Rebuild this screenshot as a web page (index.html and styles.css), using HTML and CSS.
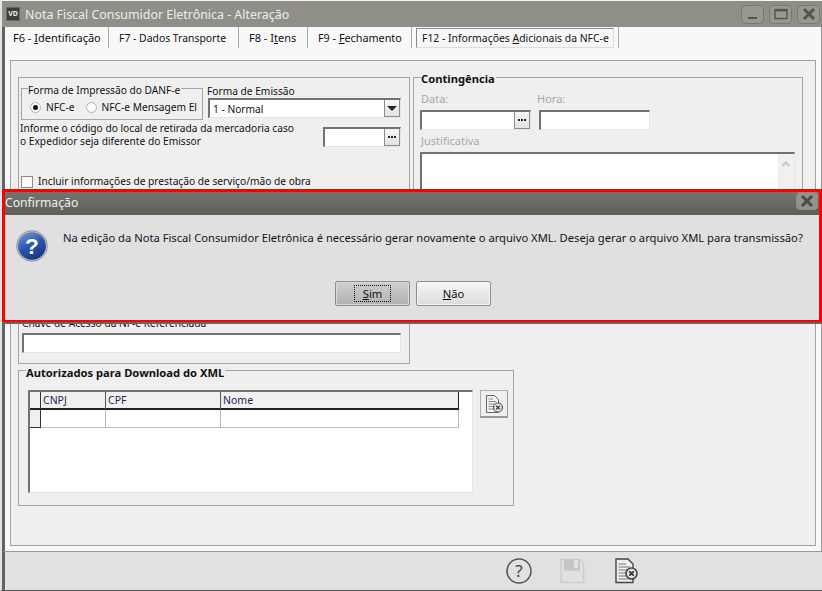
FILE: index.html
```html
<!DOCTYPE html>
<html lang="pt-BR">
<head>
  <meta charset="UTF-8" />
  <title>Nota Fiscal Consumidor Eletrônica - Alteração</title>
  <link rel="stylesheet" href="styles.css">
</head>
<body>
  <div class="window">

    <div class="titlebar">
      <span class="app-icon">VD</span>
      <span class="app-title">Nota Fiscal Consumidor Eletrônica - Alteração</span>
      <div class="win-buttons">
        <span class="win-btn">
          <svg width="12" height="12" viewBox="0 0 12 12"><rect x="1" y="9" width="9" height="2" fill="#55554f"/></svg>
        </span>
        <span class="win-btn">
          <svg width="14" height="12" viewBox="0 0 14 12"><rect x="1" y="1.5" width="12" height="9" fill="none" stroke="#55554f" stroke-width="1.4"/><rect x="1" y="1" width="12" height="2.4" fill="#55554f"/></svg>
        </span>
        <span class="win-btn">
          <svg width="14" height="12" viewBox="0 0 14 12"><path d="M2 1 L12 11 M12 1 L2 11" stroke="#55554f" stroke-width="3"/></svg>
        </span>
      </div>
    </div>

    <div class="content">
      <div class="tabs">
        <span class="tab tab-1"><span>F6 - <u>I</u>dentificação</span></span>
        <span class="tab tab-2"><span>F7 - Dados Transporte</span></span>
        <span class="tab tab-3"><span>F8 - I<u>t</u>ens</span></span>
        <span class="tab tab-4"><span>F9 - <u>F</u>echamento</span></span>
        <span class="tab-active"><span class="tab-active-in"><span>F12 - Informações <u>A</u>dicionais da NFC-e</span></span></span>
      </div>

      <div class="page">
        <div class="top-row">

          <!-- left panel -->
          <div class="panel-left">
            <div class="emit-row">
              <div class="group print-group">
                <div class="group-title">Forma de Impressão do DANF-e</div>
                <div class="radios">
                  <span class="radio radio-on"></span><span class="radio-label">NFC-e</span>
                  <span class="radio"></span><span class="radio-label">NFC-e Mensagem El</span>
                </div>
              </div>
              <div class="emit-col">
                <div class="emit-label">Forma de Emissão</div>
                <div class="input select-box">
                  <span class="select-text">1 - Normal</span>
                  <span class="mini-btn"><i class="arrow"></i></span>
                </div>
              </div>
            </div>

            <div class="local-row">
              <div class="local-text">Informe o código do local de retirada da mercadoria caso<br>o Expedidor seja diferente do Emissor</div>
              <div class="input local-input"><span class="mini-btn"><i class="dots"></i></span></div>
            </div>

            <div class="check-row">
              <span class="check"></span>
              <span class="check-label">Incluir informações de prestação de serviço/mão de obra</span>
            </div>

            <div class="chave-label">Chave de Acesso da NF-e Referenciada</div>
            <div class="input chave-input"></div>
          </div>

          <!-- right panel -->
          <div class="group panel-right">
            <div class="group-title bold">Contingência</div>
            <div class="cont-row">
              <div class="cont-col">
                <div class="muted">Data:</div>
                <div class="input date-input"><span class="mini-btn"><i class="dots"></i></span></div>
              </div>
              <div class="cont-col">
                <div class="muted hour-label">Hora:</div>
                <div class="input hour-input"></div>
              </div>
            </div>
            <div class="muted just-label">Justificativa</div>
            <div class="input just-input">
              <div class="scroll">
                <svg width="10" height="8" viewBox="0 0 10 8"><path d="M1.5 6 L5 2.5 L8.5 6" fill="none" stroke="#c4c4c4" stroke-width="2"/></svg>
              </div>
            </div>
          </div>
        </div>

        <div class="group auth-group">
          <div class="group-title bold">Autorizados para Download do XML</div>
          <div class="auth-row">
            <div class="grid-box">
              <table class="grid">
                <tr>
                  <th class="ind"></th>
                  <th class="c1">CNPJ</th>
                  <th class="c2">CPF</th>
                  <th class="c3">Nome</th>
                </tr>
                <tr>
                  <td class="ind"></td>
                  <td></td>
                  <td></td>
                  <td></td>
                </tr>
              </table>
            </div>
            <div class="del-btn">
              <svg width="20" height="20" viewBox="0 0 20 20">
                <path d="M2.5 1.5 H10.5 L14.5 5.5 V18.5 H2.5 Z" fill="#f2f2f2" stroke="#666" stroke-width="1"/>
                <path d="M4.5 5 H9 M4.5 7.5 H12 M4.5 10 H10 M4.5 12.5 H9 M4.5 15 H10" stroke="#888" stroke-width="1"/>
                <circle cx="14" cy="13.5" r="4.5" fill="#e4e4e4" stroke="#555" stroke-width="1.2"/>
                <path d="M12.2 11.7 L15.8 15.3 M15.8 11.7 L12.2 15.3" stroke="#444" stroke-width="1.4"/>
              </svg>
            </div>
          </div>
        </div>
      </div>
    </div>

    <div class="footer">
      <svg class="foot-help" width="26" height="26" viewBox="0 0 26 26">
        <circle cx="13" cy="13" r="12" fill="none" stroke="#555" stroke-width="1.5"/>
        <text x="13" y="19" text-anchor="middle" class="help-mark">?</text>
      </svg>
      <svg class="foot-save" width="26" height="26" viewBox="0 0 26 26">
        <path d="M2 1.5 H21 L24.5 5 V24.5 H2 Z" fill="#e0e0e0" stroke="#cdcdcd" stroke-width="1.5"/>
        <rect x="5" y="1.5" width="16" height="11" fill="#c6c6c6"/>
        <rect x="15" y="2" width="4" height="8" fill="#e2e2e2"/>
      </svg>
      <svg class="foot-doc" width="26" height="26" viewBox="0 0 26 26">
        <path d="M2 1 H14 L19 6 V24.5 H2 Z" fill="#eee" stroke="#444" stroke-width="1.4"/>
        <path d="M4.5 6 H12 M4.5 9 H16 M4.5 12 H14 M4.5 15 H12 M4.5 18 H12 M4.5 21 H14" stroke="#777" stroke-width="1.2"/>
        <circle cx="17.5" cy="15.5" r="5.5" fill="#e4e4e4" stroke="#444" stroke-width="1.6"/>
        <path d="M15.3 13.3 L19.7 17.7 M19.7 13.3 L15.3 17.7" stroke="#333" stroke-width="1.8"/>
      </svg>
    </div>

    <!-- confirmation dialog, lies over the form -->
    <div class="dialog">
      <div class="dialog-title">
        <span>Confirmação</span>
        <span class="dialog-close">
          <svg width="14" height="12" viewBox="0 0 14 12"><path d="M2 1 L12 11 M12 1 L2 11" stroke="#4c4c48" stroke-width="3"/></svg>
        </span>
      </div>
      <div class="dialog-body">
        <div class="dialog-msg">
          <svg class="q-icon" width="32" height="32" viewBox="0 0 34 34">
            <defs>
              <linearGradient id="qfill" x1="0.2" y1="0" x2="0.7" y2="1">
                <stop offset="0" stop-color="#6f95dc"/>
                <stop offset="0.5" stop-color="#2a55ad"/>
                <stop offset="1" stop-color="#15337f"/>
              </linearGradient>
            </defs>
            <circle cx="17" cy="17" r="15.5" fill="url(#qfill)" stroke="#b6b8bc" stroke-width="1.6"/>
            <circle cx="17" cy="17" r="16.4" fill="none" stroke="#77797d" stroke-width="0.6"/>
            <text x="17" y="25" text-anchor="middle" class="q-mark">?</text>
          </svg>
          <span class="msg-text">Na edição da Nota Fiscal Consumidor Eletrônica é necessário gerar novamente o arquivo XML. Deseja gerar o arquivo XML para transmissão?</span>
        </div>
        <div class="dialog-buttons">
          <button class="btn btn-focus"><span class="focus-ring"><u>S</u>im</span></button>
          <button class="btn"><u>N</u>ão</button>
        </div>
      </div>
    </div>

  </div>
</body>
</html>
```

FILE: styles.css
```css
html, body {
  margin: 0;
  padding: 0;
  background: #f0f0f0;
}
body {
  font-family: "Noto Sans", Arial, sans-serif;
  font-size: 10.2px;
  color: #111;
  overflow: hidden;
}
.window {
  position: relative;
  width: 822px;
  height: 591px;
  display: flex;
  flex-direction: column;
  box-sizing: border-box;
  border-top: 1px solid #f4f4f4;
  border-left: 2px solid #e4e4e4;
  border-bottom: 1px solid #55554f;
}

/* title bar */
.titlebar {
  height: 26px;
  background: #8f8f87;
  display: flex;
  align-items: center;
  padding: 0 2px 0 4px;
  flex-shrink: 0;
}
.app-icon {
  width: 14px;
  height: 14px;
  background: #3e3e3c;
  border: 1px solid #666;
  box-sizing: border-box;
  color: #eee;
  font-size: 7px;
  font-weight: bold;
  text-align: center;
  line-height: 12px;
}
.app-title {
  margin-left: 5px;
  font-size: 12.4px;
  color: #ececec;
}
.win-buttons {
  margin-left: auto;
  display: flex;
  gap: 5px;
}
.win-btn {
  width: 23px;
  height: 19px;
  box-sizing: border-box;
  border: 1px solid #7a7a73;
  border-radius: 4px;
  background: #98988f;
  display: flex;
  align-items: center;
  justify-content: center;
}

/* form body */
.content {
  flex: 1;
  display: flex;
  flex-direction: column;
  min-height: 0;
  background: #f8f8f8;
  border-left: 3px solid #636363;
  border-right: 1px solid #999;
  border-bottom: 1px solid #999;
  box-sizing: border-box;
}
.tabs {
  height: 21px;
  display: flex;
  align-items: stretch;
  flex-shrink: 0;
}
.tab {
  display: flex;
  align-items: center;
  box-sizing: border-box;
  border-right: 1px solid #aaa;
  white-space: nowrap;
}
.tab u,
.tab-active-in u,
.btn u {
  text-underline-offset: 1px;
}
.tab-1 { width: 104px; padding-left: 8px; font-size: 11px; }
.tab-2 { width: 130px; padding-left: 10px; font-size: 10.4px; }
.tab-3 { width: 69px; padding-left: 10px; font-size: 11px; }
.tab-4 { width: 104px; padding-left: 10px; font-size: 10.8px; }
.tab-active {
  margin-left: 4px;
  width: 203px;
  box-sizing: border-box;
  border-right: 1px solid #aaa;
  padding-right: 4px;
}
.tab-active-in {
  display: flex;
  align-items: center;
  height: 20px;
  margin-top: 1px;
  padding-left: 5px;
  box-sizing: border-box;
  border: 1px solid #888;
  border-right-color: #ddd;
  border-bottom-color: #ddd;
  background: #f7f7f7;
  font-size: 10.4px;
  white-space: nowrap;
}
.page {
  margin: 12px 5px 5px 5px;
  flex: 1;
  padding: 16px 0 0 7px;
  box-sizing: border-box;
  background: #efefef;
  border: 1px solid #a0a0a0;
  min-height: 0;
}
.top-row {
  display: flex;
  align-items: flex-start;
  gap: 3px;
  height: 287px;
}

/* group boxes */
.group {
  border: 1px solid #a5a5a5;
  box-sizing: border-box;
}
.group-title {
  width: fit-content;
  margin: -5px 0 0 6px;
  background: #efefef;
  line-height: 13px;
  padding-right: 1px;
  white-space: nowrap;
}
.group-title.bold {
  margin-left: 7px;
  font-size: 11.2px;
  font-weight: bold;
}

/* left panel */
.panel-left {
  width: 392px;
  height: 287px;
  border: 1px solid #a5a5a5;
  box-sizing: border-box;
  padding: 10px 0 0 2px;
}
.emit-row {
  display: flex;
  align-items: flex-start;
}
.print-group {
  width: 182px;
  height: 32px;
  flex-shrink: 0;
}
.radios {
  display: flex;
  align-items: center;
  margin: 3px 0 0 8px;
  white-space: nowrap;
}
.radio {
  width: 11px;
  height: 11px;
  flex-shrink: 0;
  box-sizing: border-box;
  border: 1px solid #b5b5b5;
  border-radius: 50%;
  background: #fafafa;
  display: flex;
  align-items: center;
  justify-content: center;
}
.radio-on::after {
  content: "";
  width: 5px;
  height: 5px;
  border-radius: 50%;
  background: #111;
}
.radio-label {
  margin: 0 11px 0 5px;
}
.radio-label:last-child {
  margin-right: 0;
}
.emit-col {
  margin: -3px 0 0 4px;
}
.emit-label {
  line-height: 13px;
  height: 13px;
  white-space: nowrap;
}
.input {
  box-sizing: border-box;
  background: #fff;
  border: 2px solid #727272;
  border-right: 1px solid #e4e4e4;
  border-bottom: 1px solid #e4e4e4;
  display: flex;
  align-items: stretch;
  justify-content: flex-end;
}
.select-box {
  width: 193px;
  height: 20px;
  margin: 0 0 0 1px;
}
.select-text {
  margin-right: auto;
  padding-left: 3px;
  line-height: 18px;
}
.mini-btn {
  width: 16px;
  background: linear-gradient(#f8f8f8, #e2e2e2);
  border: 1px solid #8c8c8c;
  border-width: 0 1px 1px 1px;
  box-sizing: border-box;
  display: flex;
  align-items: center;
  justify-content: center;
}
.dots {
  width: 2px;
  height: 2px;
  background: #222;
  box-shadow: -3px 0 0 #222, 3px 0 0 #222;
}
.arrow {
  width: 0;
  height: 0;
  border-left: 5px solid transparent;
  border-right: 5px solid transparent;
  border-top: 5px solid #222;
}
.local-row {
  display: flex;
  align-items: flex-start;
  margin-top: 7px;
  height: 26px;
}
.local-text {
  width: 303px;
  margin: -5px 0 0 -1px;
  line-height: 13px;
  white-space: nowrap;
}
.local-input {
  width: 78px;
  height: 20px;
}
.check-row {
  display: flex;
  align-items: center;
  margin-top: 22px;
  height: 13px;
}
.check {
  width: 12px;
  height: 12px;
  box-sizing: border-box;
  background: #fbfbfb;
  border: 1px solid #8a8a8a;
  margin-right: 5px;
}
.check-label {
  margin-top: -1px;
}
.chave-label {
  margin: 129px 0 0 1px;
  line-height: 13px;
}
.chave-input {
  width: 379px;
  height: 20px;
  margin: 3px 0 0 1px;
}

/* right panel */
.panel-right {
  width: 390px;
  height: 230px;
  padding: 0;
}
.panel-right .group-title {
  margin-top: -6px;
}
.cont-row {
  display: flex;
  margin: 7px 0 0 7px;
}
.cont-col {
  margin-right: 9px;
}
.muted {
  color: #a8a8a8;
  font-size: 11px;
  line-height: 13px;
}
.hour-label {
  margin-left: -3px;
}
.cont-col .input {
  margin: 5px 0 0 -1px;
}
.date-input,
.hour-input {
  width: 111px;
  height: 20px;
}
.just-label {
  margin: 4px 0 0 7px;
}
.just-input {
  width: 375px;
  height: 100px;
  margin: 5px 0 0 6px;
}
.scroll {
  width: 16px;
  background: #f0f0f0;
  text-align: center;
  padding-top: 6px;
  box-sizing: border-box;
  line-height: 8px;
}

/* authorised list */
.auth-group {
  width: 496px;
  height: 136px;
  margin-top: 6px;
}
.auth-row {
  display: flex;
  margin: 11px 0 0 9px;
}
.grid-box {
  width: 445px;
  height: 103px;
  box-sizing: border-box;
  background: #fff;
  border: 2px solid #727272;
  border-right: 1px solid #e4e4e4;
  border-bottom: 1px solid #e4e4e4;
}
.grid {
  border-collapse: separate;
  border-spacing: 0;
  table-layout: fixed;
  width: 429px;
}
.grid th {
  height: 18px;
  padding: 0 0 1px 2px;
  box-sizing: border-box;
  background: #f0f0f0;
  font-weight: normal;
  font-size: 10.5px;
  text-align: left;
  color: #1a2a50;
  border-right: 1px solid #222;
  border-bottom: 2px solid #222;
}
.grid td {
  height: 18px;
  padding: 0;
  box-sizing: border-box;
  border-right: 1px solid #bdbdbd;
  border-bottom: 1px solid #bdbdbd;
}
.grid .ind {
  width: 11px;
  background: #f0f0f0;
  border-right: 1px solid #333;
  border-bottom: 1px solid #333;
}
.grid th.ind {
  border-bottom: 2px solid #222;
}
.grid .c1 { width: 65px; }
.grid .c2 { width: 115px; }
.grid th.c1,
.grid th.c2 {
  border-right-color: #555;
}
.del-btn {
  width: 28px;
  height: 28px;
  box-sizing: border-box;
  margin-left: 7px;
  background: #efefef;
  border: 1px solid #b0b0b0;
  border-right-color: #999;
  border-bottom: 2px solid #999;
  display: flex;
  align-items: center;
  justify-content: center;
}

/* bottom toolbar */
.footer {
  height: 38px;
  flex-shrink: 0;
  background: #e1e1e1;
  display: flex;
  align-items: center;
  box-sizing: border-box;
  border-left: 3px solid #636363;
  padding-left: 501px;
}
.foot-save { margin-left: 27px; }
.foot-doc { margin-left: 29px; }
.help-mark {
  font-size: 17px;
  fill: #444;
}

/* dialog */
.dialog {
  position: absolute;
  left: 0;
  top: 188px;
  width: 820px;
  height: 133px;
  box-sizing: border-box;
  border: 3px solid #f00;
  border-bottom-width: 2px;
  box-shadow: 0 2px 0 #666;
  background: #e0e0e0;
  display: flex;
  flex-direction: column;
}
.dialog-title {
  height: 23px;
  flex-shrink: 0;
  background: linear-gradient(#73746e, #5e5f59);
  color: #eee;
  font-size: 12.2px;
  line-height: 21px;
  display: flex;
  align-items: flex-start;
  justify-content: space-between;
  padding: 0 1px 0 0;
}
.dialog-close {
  width: 22px;
  height: 18px;
  box-sizing: border-box;
  border: 1px solid #8b8b86;
  border-radius: 4px;
  background: #93938d;
  display: flex;
  align-items: center;
  justify-content: center;
}
.dialog-body {
  flex: 1;
  padding: 15px 0 0 11px;
  font-size: 11.2px;
}
.dialog-msg {
  display: flex;
  align-items: flex-start;
  height: 51px;
}
.q-icon {
  flex-shrink: 0;
}
.q-mark {
  font-family: "Liberation Sans", sans-serif;
  font-size: 24px;
  font-weight: bold;
  fill: #fff;
}
.msg-text {
  margin: 0 0 0 15px;
  white-space: nowrap;
  color: #10141e;
}
.dialog-buttons {
  display: flex;
  gap: 6px;
  padding-left: 319px;
}
.btn {
  width: 75px;
  height: 25px;
  padding: 0;
  font: inherit;
  color: #111;
  border: 1px solid #8d8d8d;
  border-radius: 2px;
  background: linear-gradient(#f6f6f6, #dcdcdc);
  box-shadow: inset 0 0 0 1px #f4f4f4;
}
.btn-focus {
  background: linear-gradient(#cfcfcf, #b2b2b2);
  box-shadow: inset 0 0 0 1px #d8d8d8;
}
.focus-ring {
  display: inline-block;
  width: 37px;
  height: 17px;
  line-height: 15px;
  box-sizing: border-box;
  border: 1px dotted #111;
}
```
